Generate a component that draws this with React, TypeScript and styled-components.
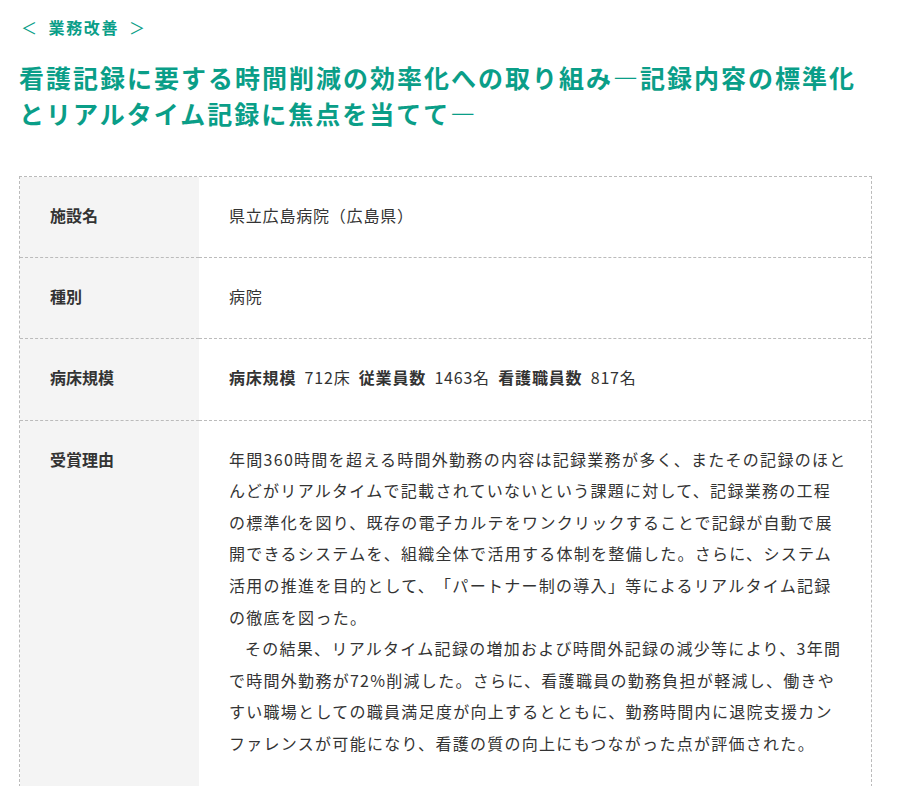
import React from "react";
import styled, { createGlobalStyle } from "styled-components";

const GlobalStyle = createGlobalStyle`
  html, body { margin: 0; padding: 0; background: #ffffff; }
  body {
    font-family: "Noto Sans CJK JP", "Noto Sans", sans-serif;
    color: #333333;
    text-spacing-trim: space-all;
  }
`;

const Page = styled.main`
  width: 853px;
  padding: 15px 0 0 19px;
`;

const Breadcrumb = styled.div`
  font-size: 16px;
  line-height: 24px;
  font-weight: 700;
  color: #0a9e88;
  letter-spacing: 0.1em;
  display: flex;
  align-items: center;
  gap: 10px;
  padding-left: 2px;
`;

const Arrow = styled.span`
  font-weight: 400;
`;

const Title = styled.h1`
  margin: 20px 0 45px;
  font-size: 25px;
  line-height: 36px;
  font-weight: 700;
  color: #0a9e88;
  letter-spacing: 0.08em;
`;

const Table = styled.dl`
  margin: 0;
  display: grid;
  grid-template-columns: 179px minmax(0, 1fr);
  border: 1px dashed #bbbbbb;
  border-bottom: none;
`;

const Label = styled.dt`
  background: #f4f4f4;
  font-weight: 700;
  font-size: 16px;
  line-height: 31.2px;
  padding: 23px 30px 26px 30px;
  border-bottom: 1px dashed #bbbbbb;
`;

const Value = styled.dd`
  margin: 0;
  font-size: 16px;
  line-height: 31.2px;
  letter-spacing: 0.05em;
  word-spacing: 4px;
  padding: 23px 24px 26px 30px;
  border-bottom: 1px dashed #bbbbbb;
`;

const Strong = styled.strong`
  font-weight: 700;
`;

const Paragraph = styled.p<{ $indent?: boolean }>`
  margin: 0;
  line-height: 31.6px;
  letter-spacing: 0.08em;
  word-spacing: 0;
  text-indent: ${(p) => (p.$indent ? "1em" : "0")};
`;

export default function App() {
  return (
    <>
      <GlobalStyle />
      <Page>
        <Breadcrumb>
          <Arrow>＜</Arrow>
          <span>業務改善</span>
          <Arrow>＞</Arrow>
        </Breadcrumb>
        <Title>
          看護記録に要する時間削減の効率化への取り組み―記録内容の標準化とリアルタイム記録に焦点を当てて―
        </Title>
        <Table>
          <Label>施設名</Label>
          <Value>県立広島病院（広島県）</Value>
          <Label>種別</Label>
          <Value>病院</Value>
          <Label>病床規模</Label>
          <Value>
            <Strong>病床規模</Strong> 712床 <Strong>従業員数</Strong> 1463名{" "}
            <Strong>看護職員数</Strong> 817名
          </Value>
          <Label>受賞理由</Label>
          <Value>
            <Paragraph>
              年間360時間を超える時間外勤務の内容は記録業務が多く、またその記録のほとんどがリアルタイムで記載されていないという課題に対して、記録業務の工程の標準化を図り、既存の電子カルテをワンクリックすることで記録が自動で展開できるシステムを、組織全体で活用する体制を整備した。さらに、システム活用の推進を目的として、「パートナー制の導入」等によるリアルタイム記録の徹底を図った。
            </Paragraph>
            <Paragraph $indent>
              その結果、リアルタイム記録の増加および時間外記録の減少等により、3年間で時間外勤務が72%削減した。さらに、看護職員の勤務負担が軽減し、働きやすい職場としての職員満足度が向上するとともに、勤務時間内に退院支援カンファレンスが可能になり、看護の質の向上にもつながった点が評価された。
            </Paragraph>
          </Value>
        </Table>
      </Page>
    </>
  );
}
